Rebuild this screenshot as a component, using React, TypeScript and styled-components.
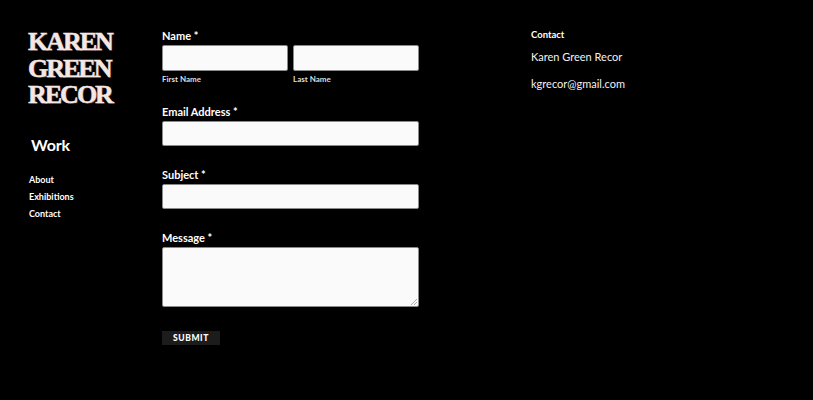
import React from "react";
import styled, { createGlobalStyle } from "styled-components";

const Global = createGlobalStyle`
  html, body { margin: 0; padding: 0; background: #000; }
  body { font-family: Lato, "Liberation Sans", sans-serif; color: #fff; }
  * { box-sizing: border-box; }
`;

const Page = styled.div`
  display: flex;
  align-items: flex-start;
  width: 813px;
  height: 400px;
  background: #000;
  padding: 29px 0 0 28px;
`;

const Sidebar = styled.aside`
  width: 134px;
  display: flex;
  flex-direction: column;
`;

const Title = styled.h1`
  margin: 0;
  font-family: "Liberation Serif", serif;
  font-weight: 700;
  font-size: 26px;
  line-height: 26.5px;
  letter-spacing: -2px;
  color: #f4e7e4;
  -webkit-text-stroke: 0.5px #f4e7e4;
  text-shadow: 1px 1px 0 #3a2222;
`;

const WorkLink = styled.div`
  margin: 26px 0 0 3px;
  font-size: 16px;
  font-weight: 700;
  color: #fff;
  letter-spacing: -0.2px;
`;

const Nav = styled.nav`
  margin: 20px 0 0 1px;
  display: flex;
  flex-direction: column;
  gap: 5px;
`;

const NavItem = styled.div`
  font-size: 9px;
  font-weight: 700;
  line-height: 12px;
  color: #fff;
`;

const Form = styled.form`
  width: 257px;
  display: flex;
  flex-direction: column;
`;

const Field = styled.div<{ $gap?: number }>`
  display: flex;
  flex-direction: column;
  margin-bottom: ${(p) => p.$gap ?? 22}px;
`;

const Label = styled.div`
  font-size: 11px;
  font-weight: 700;
  line-height: 13px;
  color: #fff;
  margin-bottom: 3px;
`;

const Row = styled.div`
  display: flex;
  gap: 5px;
`;

const Col = styled.div`
  flex: 1;
  display: flex;
  flex-direction: column;
`;

const Input = styled.div<{ $h?: number }>`
  height: ${(p) => p.$h ?? 26}px;
  background: #fafafa;
  border: 1px solid #8a8a8a;
  border-radius: 2px;
  position: relative;
`;

const Grip = styled.svg`
  position: absolute;
  right: 1px;
  bottom: 1px;
`;

const SubLabel = styled.div`
  font-size: 8px;
  font-weight: 700;
  line-height: 10px;
  margin-top: 3px;
  color: #ddd;
`;

const Submit = styled.div`
  width: 58px;
  height: 14px;
  background: #1c1c1c;
  display: flex;
  align-items: center;
  justify-content: center;
  font-size: 8.5px;
  font-weight: 900;
  letter-spacing: 0.6px;
  color: #fff;
`;

const Aside = styled.aside`
  margin-left: 112px;
  display: flex;
  flex-direction: column;
`;

const AsideHead = styled.div`
  font-size: 9.5px;
  font-weight: 700;
  line-height: 12px;
  color: #fff;
`;

const AsideText = styled.div<{ $mt: number }>`
  margin-top: ${(p) => p.$mt}px;
  font-size: 11px;
  line-height: 13px;
  color: #f2f2f2;
`;

export default function App() {
  return (
    <>
      <Global />
      <Page>
        <Sidebar>
          <Title>
            KAREN
            <br />
            GREEN
            <br />
            RECOR
          </Title>
          <WorkLink>Work</WorkLink>
          <Nav>
            <NavItem>About</NavItem>
            <NavItem>Exhibitions</NavItem>
            <NavItem>Contact</NavItem>
          </Nav>
        </Sidebar>
        <Form>
          <Field $gap={21}>
            <Label>Name *</Label>
            <Row>
              <Col>
                <Input />
                <SubLabel>First Name</SubLabel>
              </Col>
              <Col>
                <Input />
                <SubLabel>Last Name</SubLabel>
              </Col>
            </Row>
          </Field>
          <Field>
            <Label>Email Address *</Label>
            <Input $h={25} />
          </Field>
          <Field>
            <Label>Subject *</Label>
            <Input $h={25} />
          </Field>
          <Field $gap={24}>
            <Label>Message *</Label>
            <Input $h={60}>
              <Grip width="6" height="6" viewBox="0 0 6 6">
                <path d="M6 0 L0 6 M6 3 L3 6" stroke="#999" strokeWidth="0.8" />
              </Grip>
            </Input>
          </Field>
          <Submit>SUBMIT</Submit>
        </Form>
        <Aside>
          <AsideHead>Contact</AsideHead>
          <AsideText $mt={9}>Karen Green Recor</AsideText>
          <AsideText $mt={14}>kgrecor@gmail.com</AsideText>
        </Aside>
      </Page>
    </>
  );
}
